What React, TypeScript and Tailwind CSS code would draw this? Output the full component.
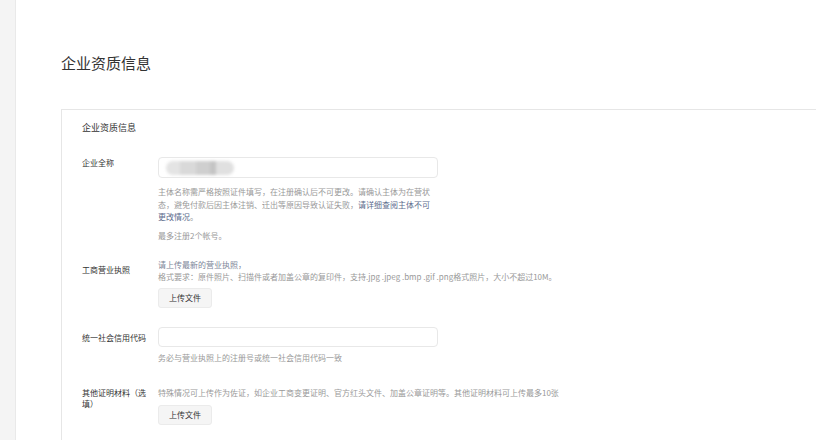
import React from 'react';

const font = { fontFamily: '"Noto Sans CJK SC", "Noto Sans", sans-serif' };

function Label({ children, pt }: { children: React.ReactNode; pt: string }) {
  return (
    <div className={`w-[68px] shrink-0 mr-[8px] text-[8px] leading-[11px] text-[#333] ${pt}`}>{children}</div>
  );
}

function UploadButton() {
  return (
    <div className="flex">
      <button className="block w-[54px] h-[20px] rounded-[3px] border border-[#ebebeb] bg-[#f5f5f5] text-[8px] leading-[18px] text-[#333]">
        上传文件
      </button>
    </div>
  );
}

export default function App() {
  return (
    <div className="flex h-[440px] w-[816px] overflow-hidden bg-white" style={font}>
      <div className="w-[16px] shrink-0 bg-[#f4f4f4] border-r border-[#e9e9e9]" />
      <div className="flex-1 pl-[45px] pt-[54px]">
        <h1 className="text-[15px] leading-[18px] font-normal text-[#333]">企业资质信息</h1>

        <div className="mt-[37px] border-l border-t border-[#e6e6e6] pl-[20px] pt-[12px] pb-[40px]">
          <div className="text-[9px] leading-[12px] text-[#333]">企业资质信息</div>

          {/* 企业全称 */}
          <div className="mt-[23px] flex">
            <Label pt="pt-[0px]">企业全称</Label>
            <div>
              <div className="relative w-[280px] h-[21px] rounded-[4px] border border-[#e8e8e8] bg-white overflow-hidden">
                <div className="absolute left-[7px] top-[3px] flex h-[14px] blur-[1.5px]">
                  <div className="w-[14px] rounded-l-full bg-[#e4e4e4]" />
                  <div className="w-[16px] bg-[#d9d9d9]" />
                  <div className="w-[14px] bg-[#cfcfcf]" />
                  <div className="w-[6px] bg-[#c4c4c4]" />
                  <div className="w-[18px] rounded-r-full bg-[#e0e0e0]" />
                </div>
              </div>
              <p className="mt-[8px] w-[276px] text-[8px] leading-[12.5px] text-[#999]">
                主体名称需严格按照证件填写，在注册确认后不可更改。请确认主体为在营状态，避免付款后因主体注销、迁出等原因导致认证失败，
                <span className="text-[#5b6b8c]">请详细查阅主体不可更改情况</span>。
              </p>
              <p className="mt-[6px] text-[8px] leading-[12px] text-[#999]">最多注册2个帐号。</p>
            </div>
          </div>

          {/* 工商营业执照 */}
          <div className="mt-[17px] flex">
            <Label pt="pt-[5px]">工商营业执照</Label>
            <div>
              <p className="text-[8px] leading-[12px] text-[#7d8699]">请上传最新的营业执照，</p>
              <p className="text-[8px] leading-[12px] text-[#999]">
                格式要求：原件照片、扫描件或者加盖公章的复印件，支持.jpg .jpeg .bmp .gif .png格式照片，大小不超过10M。
              </p>
              <div className="mt-[5px]">
                <UploadButton />
              </div>
            </div>
          </div>

          {/* 统一社会信用代码 */}
          <div className="mt-[19px] flex">
            <Label pt="pt-[5px]">统一社会信用代码</Label>
            <div>
              <div className="w-[280px] h-[20px] rounded-[4px] border border-[#e8e8e8] bg-white" />
              <p className="mt-[5px] text-[8px] leading-[12px] text-[#999]">务必与营业执照上的注册号或统一社会信用代码一致</p>
            </div>
          </div>

          {/* 其他证明材料 */}
          <div className="mt-[23px] flex">
            <Label pt="pt-[0px]">其他证明材料（选填）</Label>
            <div>
              <p className="text-[8px] leading-[12px] text-[#999]">
                特殊情况可上传作为佐证，如企业工商变更证明、官方红头文件、加盖公章证明等。其他证明材料可上传最多10张
              </p>
              <div className="mt-[6px]">
                <UploadButton />
              </div>
            </div>
          </div>
        </div>
      </div>
    </div>
  );
}
